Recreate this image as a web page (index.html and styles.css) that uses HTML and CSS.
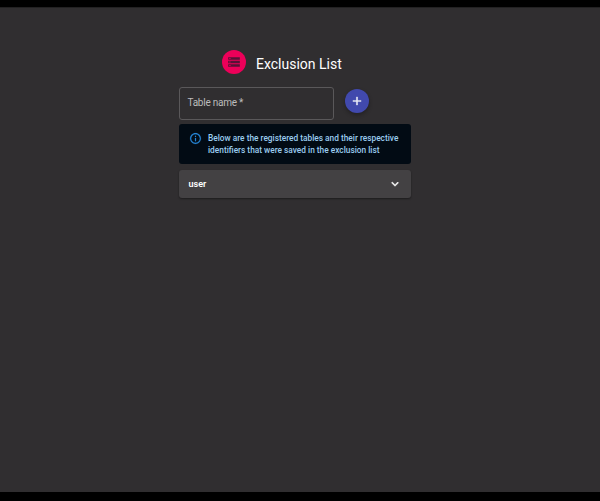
FILE: index.html
```html
<!DOCTYPE html>
<html lang="en">
<head>
<meta charset="utf-8">
<title>Exclusion List</title>
<link rel="stylesheet" href="styles.css">
</head>
<body>
<main class="page">
  <section class="panel">
    <header class="heading">
      <span class="avatar">
        <svg viewBox="0 0 24 24" width="14" height="14"><path fill="#571236" d="M2 20h20v-4H2v4zm2-3h2v2H4v-2zM2 4v4h20V4H2zm4 3H4V5h2v2zm-4 7h20v-4H2v4zm2-3h2v2H4v-2z"/></svg>
      </span>
      <h1>Exclusion List</h1>
    </header>
    <form class="entry">
      <div class="field"><span>Table name *</span></div>
      <button class="add" type="button" aria-label="Add">
        <svg viewBox="0 0 24 24" width="14" height="14"><path fill="#fff" stroke="#fff" stroke-width=".5" d="M19 13h-6v6h-2v-6H5v-2h6V5h2v6h6v2z"/></svg>
      </button>
    </form>
    <div class="alert">
      <svg viewBox="0 0 24 24" width="13" height="13"><path fill="#2584d4" stroke="#2584d4" stroke-width=".3" d="M11 7h2v2h-2zm0 4h2v6h-2zm1-9C6.48 2 2 6.48 2 12s4.48 10 10 10 10-4.48 10-10S17.520 2 12 2zm0 18c-4.410 0-8-3.590-8-8s3.590-8 8-8 8 3.590 8 8-3.590 8-8 8z"/></svg>
      <p>Below are the registered tables and their respective<br>identifiers that were saved in the exclusion list</p>
    </div>
    <div class="row">
      <span>user</span>
      <svg viewBox="0 0 24 24" width="14" height="14"><path fill="#fff" stroke="#fff" stroke-width=".8" d="M16.590 8.590 12 13.170 7.410 8.590 6 10l6 6 6-6z"/></svg>
    </div>
  </section>
</main>
</body>
</html>
```
FILE: styles.css
```css
* {
  box-sizing: border-box;
}

body {
  margin: 0;
  height: 501px;
  padding: 7px 0 9px;
  background: #000;
  color: #fff;
  font-family: Roboto, sans-serif;
}

.page {
  height: 485px;
  padding: 42px 0 0 179px;
  border-top: 1px solid #222122;
  background: #302e30;
}

.panel {
  width: 232px;
}

.heading {
  display: flex;
  gap: 10px;
  height: 24px;
  padding-left: 43px;
}

.avatar {
  display: flex;
  align-items: center;
  justify-content: center;
  width: 24px;
  height: 24px;
  border-radius: 50%;
  background: #ec0059;
}

h1 {
  margin: 4px 0 0;
  font-size: 14px;
  font-weight: 400;
  line-height: 20px;
  white-space: nowrap;
}

.entry {
  display: flex;
  gap: 11px;
  margin: 13px 0 4px;
}

.field {
  display: flex;
  align-items: center;
  width: 155px;
  height: 33px;
  padding: 0 0 2px 7.500px;
  border: 1px solid #5a585a;
  border-radius: 3px;
  color: #bdbcbd;
  font-size: 10px;
  letter-spacing: -.25px;
}

.add {
  display: flex;
  align-items: center;
  justify-content: center;
  width: 24px;
  height: 24px;
  margin-top: 2px;
  padding: 0;
  border: 0;
  border-radius: 50%;
  background: #4149ad;
  box-shadow: 0 2px 4px rgba(0, 0, 0, .3);
}

.alert {
  display: flex;
  gap: 6px;
  height: 40px;
  padding: 8px 10px;
  border-radius: 3px;
  background: #020b14;
  color: #9bcdf0;
}

.alert p {
  margin: 0;
  font-size: 8.320px;
  font-weight: 500;
  line-height: 12px;
  white-space: nowrap;
}

.row {
  display: flex;
  align-items: center;
  justify-content: space-between;
  height: 28px;
  margin-top: 6px;
  padding: 0 9.500px;
  border-radius: 3px;
  background: #434143;
  box-shadow: 0 1px 2px rgba(0, 0, 0, .4);
  font-size: 9px;
  font-weight: 600;
}
```
